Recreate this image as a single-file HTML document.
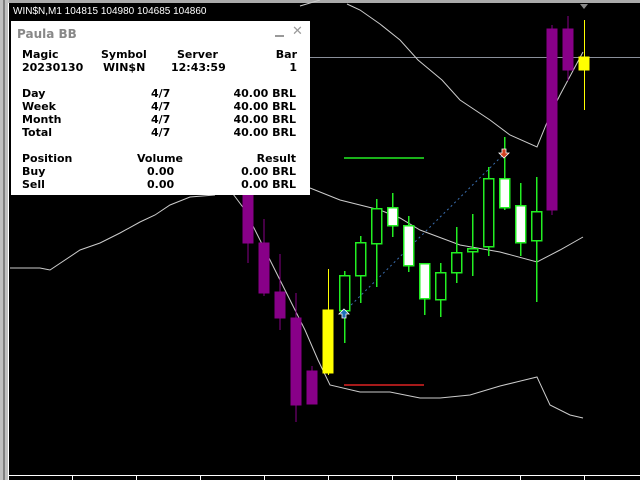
<!DOCTYPE html><html><head><style>
body{margin:0;width:640px;height:480px;background:#000;overflow:hidden;position:relative;font-family:"DejaVu Sans","Liberation Sans",sans-serif}
svg{position:absolute;left:0;top:0}
#p{position:absolute;left:11px;top:21px;width:299px;height:174px;background:#fff;font-size:11px;font-weight:bold;color:#000}
#p div{position:absolute;white-space:nowrap}
.c{shape-rendering:crispEdges}
</style></head><body>
<svg width="640" height="480">
<g class="c">
<rect x="0" y="0" width="640" height="3" fill="#aaa"/>
<rect x="0" y="0" width="9" height="480" fill="#c0c0c0"/>
<rect x="3" y="0" width="2" height="480" fill="#808080"/>
<rect x="8" y="3" width="1" height="477" fill="#fff"/>
<line x1="9" y1="475.5" x2="640" y2="475.5" stroke="#fff"/>
<g stroke="#fff"><line x1="72.5" y1="475" x2="72.5" y2="480"/><line x1="136.5" y1="475" x2="136.5" y2="480"/><line x1="200.5" y1="475" x2="200.5" y2="480"/><line x1="264.5" y1="475" x2="264.5" y2="480"/><line x1="328.5" y1="475" x2="328.5" y2="480"/><line x1="392.5" y1="475" x2="392.5" y2="480"/><line x1="456.5" y1="475" x2="456.5" y2="480"/><line x1="520.5" y1="475" x2="520.5" y2="480"/><line x1="584.5" y1="475" x2="584.5" y2="480"/></g>
<line x1="310" y1="57.5" x2="640" y2="57.5" stroke="#8a8f9a"/>
</g>
<polygon points="580,4 588,4 584,9" fill="#888"/>
<g fill="none" stroke="#ccc" stroke-width="1">
<polyline points="300,6 320,0"/>
<polyline points="347,4 360,10 380,24 400,40 418,60 442,80 460,100 490,120 510,135 537,147 550,115 560,95 583,52"/>
<polyline points="10,268 40,268 50,270 80,250 100,243 120,233 140,222 155,215 170,205 190,197 215,195"/>
<polyline points="310,188 340,200 380,210 400,218 420,230 460,245 500,252 537,262 560,250 583,237"/>
<polyline points="230,190 245,210 260,240 275,270 290,300 305,330 318,360 330,385 360,392 390,392 420,398 440,398 470,395 500,386 537,377 550,405 570,415 583,418"/>
</g>
<line x1="344" y1="158" x2="424" y2="158" stroke="#2e2" stroke-width="1.5"/>
<line x1="344" y1="385" x2="424" y2="385" stroke="#d22" stroke-width="1.5"/>
<line x1="344" y1="312" x2="504" y2="154" stroke="#3a6fb0" stroke-dasharray="2,3"/>
<g class="c">
<g fill="#808" stroke="#808">
<line x1="248" y1="180" x2="248" y2="263"/><rect x="243" y="190" width="10" height="53"/>
<line x1="264" y1="219" x2="264" y2="296"/><rect x="259" y="243" width="10" height="50"/>
<line x1="280" y1="254" x2="280" y2="330"/><rect x="275" y="292" width="10" height="26"/>
<line x1="296" y1="293" x2="296" y2="422"/><rect x="291" y="318" width="10" height="87"/>
<line x1="312" y1="366" x2="312" y2="404"/><rect x="307" y="371" width="10" height="33"/>
<line x1="552" y1="25" x2="552" y2="215"/><rect x="547" y="29" width="10" height="181"/>
<line x1="568" y1="16" x2="568" y2="81"/><rect x="563" y="29" width="10" height="41"/>
</g>
<g fill="#ff0" stroke="#ff0">
<line x1="328.5" y1="269" x2="328.5" y2="375"/><rect x="323" y="310" width="10" height="63"/>
<line x1="584.5" y1="20" x2="584.5" y2="110"/><rect x="579" y="57" width="10" height="13"/>
</g>
<g stroke="#2e2" fill="#000" stroke-width="1.5">
<line x1="344.5" y1="271" x2="344.5" y2="343"/><rect x="339.5" y="275.5" width="10" height="35"/>
<line x1="360.5" y1="236" x2="360.5" y2="303"/><rect x="355.5" y="242.5" width="10" height="33"/>
<line x1="376.5" y1="199" x2="376.5" y2="287"/><rect x="371.5" y="208.5" width="10" height="35"/>
<line x1="440.5" y1="263" x2="440.5" y2="317"/><rect x="435.5" y="272.5" width="10" height="27"/>
<line x1="456.5" y1="227" x2="456.5" y2="283"/><rect x="451.5" y="252.5" width="10" height="20"/>
<line x1="472.5" y1="214" x2="472.5" y2="276"/><rect x="467.5" y="248.5" width="10" height="3"/>
<line x1="488.5" y1="167" x2="488.5" y2="256"/><rect x="483.5" y="178.5" width="10" height="68"/>
<line x1="536.5" y1="177" x2="536.5" y2="302"/><rect x="531.5" y="211.5" width="10" height="29"/>
</g>
<g stroke="#2e2" fill="#fff" stroke-width="1.5">
<line x1="392.5" y1="193" x2="392.5" y2="237"/><rect x="387.5" y="207.5" width="10" height="18"/>
<line x1="408.5" y1="216" x2="408.5" y2="272"/><rect x="403.5" y="225.5" width="10" height="40"/>
<line x1="424.5" y1="263" x2="424.5" y2="315"/><rect x="419.5" y="263.5" width="10" height="35"/>
<line x1="504.5" y1="137" x2="504.5" y2="210"/><rect x="499.5" y="178.5" width="10" height="29"/>
<line x1="520.5" y1="183" x2="520.5" y2="256"/><rect x="515.5" y="205.5" width="10" height="37"/>
</g>
</g>
<polygon points="344,309 349,314 346,314 346,318 342,318 342,314 339,314" fill="#1e6fb8" stroke="#fff" stroke-width="0.8"/>
<polygon points="504,158 509,153 506,153 506,149 502,149 502,153 499,153" fill="#d04020" stroke="#fff" stroke-width="0.8"/>
<text x="13" y="14" fill="#fff" font-family="Liberation Sans,sans-serif" font-size="10">WIN$N,M1  104815 104980 104685 104860</text>
</svg>
<div id="p">
<div style="left:6px;top:6px;color:#888;font-size:12px">Paula BB</div>
<div style="left:264px;top:14px;width:9px;height:2px;background:#999"></div>
<div style="left:281px;top:3px;color:#999;font-size:13px">✕</div>
<div style="left:11px;top:27px">Magic</div><div style="left:90px;top:27px">Symbol</div><div style="left:166px;top:27px">Server</div><div style="right:13px;top:27px">Bar</div>
<div style="left:11px;top:40px">20230130</div><div style="left:92px;top:40px">WIN$N</div><div style="left:160px;top:40px">12:43:59</div><div style="right:13px;top:40px">1</div>
<div style="left:11px;top:66px">Day</div><div style="left:140px;top:66px">4/7</div><div style="right:14px;top:66px">40.00 BRL</div>
<div style="left:11px;top:79px">Week</div><div style="left:140px;top:79px">4/7</div><div style="right:14px;top:79px">40.00 BRL</div>
<div style="left:11px;top:92px">Month</div><div style="left:140px;top:92px">4/7</div><div style="right:14px;top:92px">40.00 BRL</div>
<div style="left:11px;top:105px">Total</div><div style="left:140px;top:105px">4/7</div><div style="right:14px;top:105px">40.00 BRL</div>
<div style="left:11px;top:131px">Position</div><div style="left:126px;top:131px">Volume</div><div style="right:14px;top:131px">Result</div>
<div style="left:11px;top:144px">Buy</div><div style="left:136px;top:144px">0.00</div><div style="right:14px;top:144px">0.00 BRL</div>
<div style="left:11px;top:157px">Sell</div><div style="left:136px;top:157px">0.00</div><div style="right:14px;top:157px">0.00 BRL</div>
</div>
</body></html>
